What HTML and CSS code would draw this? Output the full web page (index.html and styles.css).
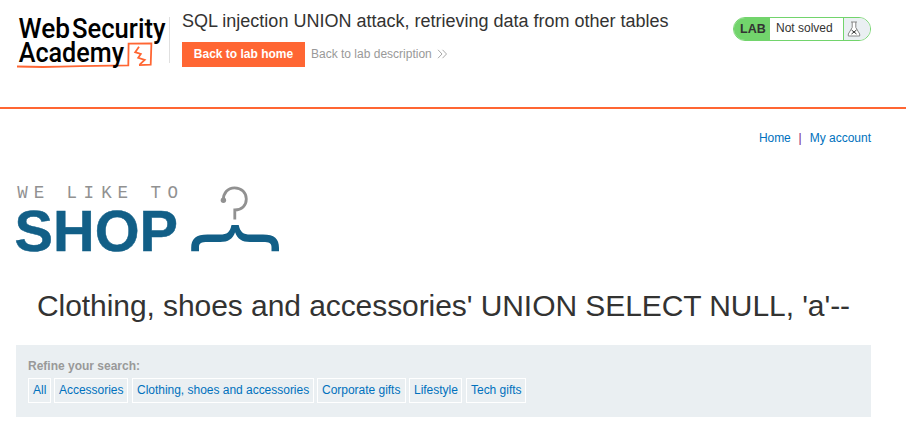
FILE: index.html
```html
<!DOCTYPE html>
<html lang="en">
<head>
<meta charset="utf-8">
<title>SQL injection UNION attack, retrieving data from other tables</title>
<link rel="stylesheet" href="styles.css">
</head>
<body>
<header class="lab-header">
  <svg class="academy-logo" width="154" height="60" viewBox="16 12 154 60" role="img" aria-label="Web Security Academy">
    <path class="stroke" d="M17 66.5 Q45 67.6 80 66.2 L128.3 65.3 L128.6 43.7 L151.4 43.4 L150.7 64.7 L139 65.2"/>
    <path class="stroke bolt" d="M139 46.8 L135.2 52.2 L140.8 53.9 L138.2 57.8 L144.7 59.8 L139.4 64.8"/>
    <g class="academy-name">
      <text x="18.5" y="38" textLength="51.5" lengthAdjust="spacingAndGlyphs">Web</text>
      <text x="72" y="38" textLength="93.5" lengthAdjust="spacingAndGlyphs">Security</text>
      <text x="18.7" y="62.4" textLength="105.3" lengthAdjust="spacingAndGlyphs">Academy</text>
    </g>
    <path class="divider" d="M169.5 17V63"/>
  </svg>
  <div class="title-block">
    <h2>SQL injection UNION attack, retrieving data from other tables</h2>
    <div class="actions">
      <a class="button" href="#">Back to lab home</a>
      <a class="description" href="#">Back to lab description
        <svg width="11" height="10" viewBox="0 0 11 10"><path d="M1 .8L5 5L1 9.2M5.5 .8L9.5 5L5.5 9.2"/></svg>
      </a>
    </div>
  </div>
  <div class="status">
    <b>LAB</b><span class="state">Not solved</span>
    <span class="flask"><svg width="14" height="16" viewBox="0 0 14 16"><path d="M4 1H10M5.2 1V6.5L1.3 13V15H12.7V13L8.8 6.5V1"/><path class="mark" d="M4.5 9L9.5 13M9.5 9L4.5 13"/></svg></span>
  </div>
</header>
<main>
  <nav class="top-links"><a href="#">Home</a><span>|</span><a href="#">My account</a></nav>
  <svg class="shop-logo" width="270" height="76" viewBox="12 180 270 76" role="img" aria-label="We like to shop">
    <text class="tagline" y="198.4" x="17.2 33.8 66.6 83.5 101.2 117.4 150.4 167.5">WELIKETO</text>
    <text class="shop" x="14.5" y="251.2" textLength="163.5" lengthAdjust="spacingAndGlyphs">SHOP</text>
    <path class="hook" d="M223.3 200 C223.3 193 227.8 187.8 234.5 187.8 C241.5 187.8 246.3 192.8 246.3 199 C246.3 205.5 241.7 210 234.8 210 V219.5"/>
    <circle class="knob" cx="223.4" cy="200.3" r="2.7"/>
    <path class="hanger" d="M231.5 225H238.7C240.3 232 243 234.6 250.5 234.6H263C274.5 234.6 279 239 279 248V251.2H271.5V247C271.5 243 269 242 263 242H250C242 242 237.2 239 235.1 232.3C233 239 228.2 242 220.2 242H207.5C201.5 242 199 243 199 247V251.2H191.2V248C191.2 239 196 234.6 207.5 234.6H219.8C227.3 234.6 230 232 231.5 225Z"/>
  </svg>
  <h1>Clothing, shoes and accessories' UNION SELECT NULL, 'a'--</h1>
  <section class="search">
    <label>Refine your search:</label>
    <div class="filters">
      <a href="#">All</a>
      <a href="#">Accessories</a>
      <a href="#">Clothing, shoes and accessories</a>
      <a href="#">Corporate gifts</a>
      <a href="#">Lifestyle</a>
      <a href="#">Tech gifts</a>
    </div>
  </section>
</main>
</body>
</html>
```
FILE: styles.css
```css
* { box-sizing: border-box; }
body { margin: 0; background: #fff; color: #333332; font: 12px/16px "Liberation Sans", Arial, sans-serif; }
a { color: #0071bd; text-decoration: none; }
.lab-header { display: flex; align-items: flex-start; height: 109px; padding: 0 35px 0 16px; border-bottom: 2px solid #ff6633; }
.academy-logo { flex: none; margin-top: 12px; }
.academy-name { font-family: Roboto, sans-serif; font-size: 28px; font-weight: 500; fill: #000; }
.stroke { fill: none; stroke: #ff6633; stroke-width: 1.8; }
.divider { stroke: #e0e0e0; stroke-width: 1; }
.title-block { margin: 10px 0 0 12px; flex: 1; }
h2 { margin: 0; font-size: 18px; line-height: 22px; font-weight: 400; white-space: nowrap; }
.actions { display: flex; align-items: center; margin-top: 10px; }
.button { width: 123px; height: 25px; line-height: 25px; text-align: center; background: #ff6633; color: #fff; font-weight: 700; }
.description { display: flex; align-items: center; gap: 5px; height: 16px; margin: -2px 0 0 6px; color: #999; }
.description svg { fill: none; stroke: #aaa; stroke-width: 1; }
.status { display: flex; width: 138px; height: 24px; margin-top: 17px; border: 1px solid #72d46c; border-radius: 12px; overflow: hidden; }
.status b { width: 36px; padding-left: 6px; background: #72d46c; font-size: 12.5px; line-height: 22px; }
.state { width: 73px; padding-left: 6px; line-height: 20px; }
.flask { flex: 1; padding: 3px 0 0 3px; border-left: 1px solid #72d46c; background: #eaeff2; }
.flask svg { display: block; fill: #fff; stroke: #888; stroke-width: 1; }
.flask .mark { stroke: #333; }
main { padding: 21px 35px 0 16px; }
.top-links { display: flex; justify-content: flex-end; gap: 8px; }
.top-links a:first-child { letter-spacing: -.15px; }
.top-links span { color: #7b1a80; }
.shop-logo { display: block; margin: 34px 0 0 -4px; }
.tagline { font-family: "Liberation Mono", monospace; font-size: 17.5px; fill: #919191; }
.shop { font-size: 57px; font-weight: 700; fill: #125f87; stroke: #125f87; stroke-width: .5; }
.hook { fill: none; stroke: #919191; stroke-width: 2.8; }
.knob { fill: #919191; }
.hanger { fill: #125f87; }
h1 { margin: 30px 0 0; font-size: 30px; line-height: 40px; font-weight: 400; letter-spacing: -.07px; text-align: center; white-space: nowrap; }
.search { height: 72px; margin-top: 19px; padding: 12px; background: #eaeff2; }
.search label { display: block; height: 21px; line-height: 18px; color: #999; font-weight: 700; }
.filters { display: grid; grid-template-columns: 23px 75px 182px 89px 54px 60px; column-gap: 3px; }
.filters a { height: 25px; padding: 0 4px; border: 1px solid #fff; line-height: 23px; letter-spacing: -.02px; white-space: nowrap; }
.filters a:nth-child(2), .filters a:nth-child(5) { margin-right: 1px; }
```
